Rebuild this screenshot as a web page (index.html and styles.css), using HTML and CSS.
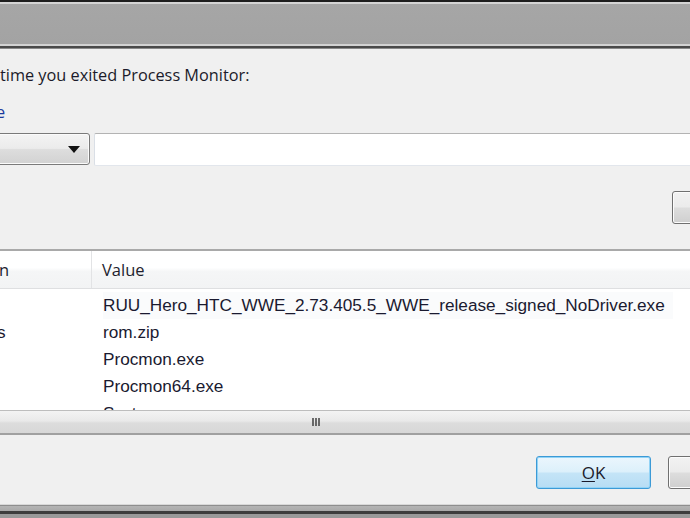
FILE: index.html
```html
<!DOCTYPE html>
<html>
<head>
<meta charset="utf-8">
<link rel="stylesheet" href="styles.css">
</head>
<body>
<div class="window">
  <div class="titlebar"></div>
  <div class="dialog">
    <div class="intro">time you exited Process Monitor:</div>
    <div class="label">e</div>
    <div class="row-inputs">
      <div class="combo"><span class="arrow"></span></div>
      <div class="textbox"></div>
    </div>
    <div class="row-btn">
      <div class="btn btn-side"></div>
    </div>
    <div class="listview">
      <div class="lv-header">
        <div class="col col1">n</div>
        <div class="col col2">Value</div>
      </div>
      <div class="lv-body">
        <div class="lv-row sel"><span class="c1"></span><span class="c2">RUU_Hero_HTC_WWE_2.73.405.5_WWE_release_signed_NoDriver.exe</span></div>
        <div class="lv-row"><span class="c1">s</span><span class="c2">rom.zip</span></div>
        <div class="lv-row"><span class="c1"></span><span class="c2">Procmon.exe</span></div>
        <div class="lv-row"><span class="c1"></span><span class="c2">Procmon64.exe</span></div>
        <div class="lv-row"><span class="c1"></span><span class="c2">System</span></div>
      </div>
      <div class="hscroll"><span class="grip"></span></div>
    </div>
    <div class="footer">
      <div class="btn btn-ok"><span><u>O</u>K</span></div>
      <div class="btn btn-cancel"></div>
    </div>
  </div>
  <div class="bottomframe"></div>
</div>
</body>
</html>
```

FILE: styles.css
```css
html, body {
  margin: 0;
  padding: 0;
  background: #f0f0f0;
}
.window {
  width: 690px;
  height: 518px;
  overflow: hidden;
  display: flex;
  flex-direction: column;
  font-family: "Open Sans", "Noto Sans", sans-serif;
  color: #1b1b2a;
}
.titlebar {
  height: 49px;
  flex: none;
  background: linear-gradient(to bottom,
    #1e1e1e 0, #1e1e1e 2px,
    #d4d4d4 2px, #d4d4d4 4px,
    #a6a6a6 4px, #a3a3a3 44px,
    #d2d2d2 44px, #d2d2d2 46px,
    #4a4a4a 46px, #4a4a4a 48px,
    #8a8a8a 48px, #8a8a8a 49px);
}
.dialog {
  flex: 1;
  display: flex;
  flex-direction: column;
  background: #f0f0f0;
}
.intro {
  margin-top: 14px;
  height: 24px;
  line-height: 24px;
  font-size: 16.3px;
}
.label {
  margin-top: 14px;
  height: 22px;
  line-height: 22px;
  font-size: 16.3px;
  color: #1a3a9c;
  margin-left: -4px;
}
.row-inputs {
  margin-top: 9px;
  display: flex;
  align-items: center;
  height: 34px;
}
.combo {
  margin-left: -40px;
  width: 128px;
  height: 30px;
  border: 1px solid #7a7a7a;
  border-radius: 3px;
  background: linear-gradient(to bottom, #f4f4f4 0%, #ebebeb 48%, #dddddd 52%, #d2d2d2 100%);
  position: relative;
  box-shadow: inset 0 0 0 1px #fbfbfb;
}
.arrow {
  position: absolute;
  right: 9px;
  top: 12px;
  width: 0;
  height: 0;
  border-left: 6px solid transparent;
  border-right: 6px solid transparent;
  border-top: 7px solid #111;
}
.textbox {
  margin-left: 4px;
  flex: 1;
  margin-right: -20px;
  height: 31px;
  background: #fff;
  border: 1px solid #b3b3b3;
  border-bottom-color: #e2e6ec;
  border-left-color: #dadfe6;
  border-radius: 2px;
}
.row-btn {
  margin-top: 23px;
  height: 36px;
  display: flex;
  justify-content: flex-end;
  margin-right: -60px;
}
.btn {
  border: 1px solid #707070;
  border-radius: 3px;
  background: linear-gradient(to bottom, #f2f2f2 0%, #ebebeb 48%, #dddddd 52%, #cfcfcf 100%);
  box-shadow: inset 0 0 0 1px #fcfcfc;
}
.btn-side {
  width: 76px;
  height: 31px;
  margin-top: 2px;
}
.listview {
  margin-top: 24px;
  display: flex;
  flex-direction: column;
  background: #fff;
  border-top: 2px solid #a9a9a9;
  border-bottom: 2px solid #a0a0a0;
  height: 186px;
  box-sizing: border-box;
}
.lv-header {
  height: 37px;
  flex: none;
  display: flex;
  background: linear-gradient(to bottom, #ffffff 0%, #ffffff 45%, #f5f6f7 55%, #f2f3f4 100%);
  border-bottom: 1px solid #dedfe1;
  font-size: 16.5px;
  color: #1e1e2e;
}
.col {
  line-height: 37px;
}
.col1 {
  width: 93px;
  border-right: 1px solid #e2e3e5;
  margin-left: -1px;
  box-sizing: border-box;
}
.col2 {
  padding-left: 10px;
}
.lv-body {
  flex: 1;
  overflow: hidden;
  padding-top: 3px;
  font-family: "Liberation Sans", Arial, sans-serif;
  font-size: 17.2px;
  color: #1a1a30;
}
.lv-row {
  height: 27px;
  line-height: 27px;
  display: flex;
  white-space: nowrap;
}
.lv-row .c1 {
  width: 106px;
  flex: none;
  margin-left: -3px;
}
.lv-row.sel .c2 {
  background: #fafbfc;
  padding-right: 8px;
}
.hscroll {
  flex: none;
  height: 22px;
  border-top: 1px solid #bdbdbd;
  background: linear-gradient(to bottom, #f3f3f3 0%, #e9e9e9 45%, #dcdcdc 55%, #d7d7d7 100%);
  display: flex;
  align-items: center;
  padding-left: 312px;
}
.grip {
  width: 9px;
  height: 8px;
  background: repeating-linear-gradient(to right, #4a4a4a 0, #4a4a4a 2px, transparent 2px, transparent 3px);
  opacity: 0.8;
}
.footer {
  flex: 1;
  display: flex;
  justify-content: flex-end;
  align-items: flex-start;
  padding-top: 21px;
  gap: 17px;
  margin-right: -56px;
}
.btn-ok {
  width: 113px;
  height: 31px;
  border: 1px solid #3c9ad6;
  border-radius: 3px;
  background: linear-gradient(to bottom, #ebf6fd 0%, #dcf0fb 48%, #c4e4f7 52%, #b7ddf4 100%);
  box-shadow: inset 0 0 0 1px #92d3f6;
  display: flex;
  align-items: center;
  justify-content: center;
  font-size: 17px;
  color: #1a1a2a;
}
.btn-ok u {
  text-decoration-thickness: 1px;
  text-underline-offset: 2px;
}
.btn-cancel {
  width: 76px;
  height: 31px;
}
.bottomframe {
  flex: none;
  height: 14px;
  background: linear-gradient(to bottom,
    #d8d8d8 0, #d8d8d8 1px,
    #8e8e8e 1px, #8e8e8e 2px,
    #b4b4b4 2px, #a9a9a9 7px,
    #3e3e3e 7px, #3e3e3e 10px,
    #9a9a9a 10px, #9a9a9a 14px);
}
```
